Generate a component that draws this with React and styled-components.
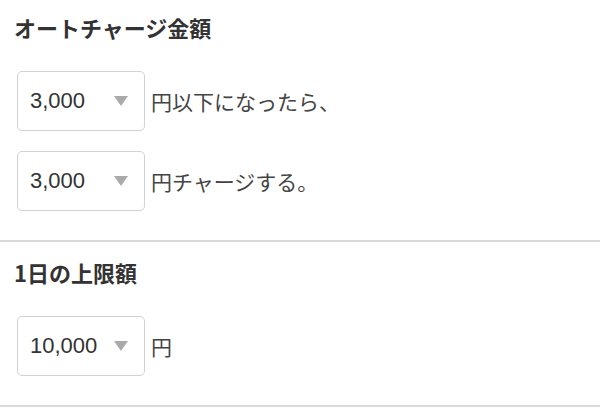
import React from "react";
import styled, { createGlobalStyle } from "styled-components";

const GlobalStyle = createGlobalStyle`
  body {
    margin: 0;
    background: #fff;
    font-family: "Liberation Sans", "Noto Sans CJK JP", sans-serif;
    color: #333;
  }
`;

const Section = styled.section`
  padding: ${(props) => (props.first ? "12px" : "15px")} 0 29px;
  border-bottom: 2px solid #dadada;
`;

const Title = styled.h2`
  margin: 0 0 29px 14px;
  font-family: "Noto Sans CJK JP", sans-serif;
  font-size: 22px;
  line-height: 30px;
  font-weight: 700;
  color: #333;
`;

const Rows = styled.div`
  display: flex;
  flex-direction: column;
  gap: 20px;
  padding-left: 17px;
`;

const Row = styled.div`
  display: flex;
  align-items: center;
  gap: 6px;
`;

const Select = styled.div`
  box-sizing: border-box;
  width: 128px;
  height: 60px;
  border: 1px solid #d2d2d2;
  border-radius: 5px;
  display: flex;
  align-items: center;
  justify-content: space-between;
  padding: 0 16px 0 12px;
  font-family: "Liberation Sans", sans-serif;
  font-size: 22px;
  color: #333;
`;

const Arrow = styled.span`
  width: 0;
  height: 0;
  border-left: 7.5px solid transparent;
  border-right: 7.5px solid transparent;
  border-top: 10px solid #aaa;
`;

const Label = styled.span`
  font-family: "Noto Sans CJK JP", sans-serif;
  font-size: 21px;
  color: #444;
`;

function AmountSelect({ value, label }) {
  return (
    <Row>
      <Select>
        <span>{value}</span>
        <Arrow />
      </Select>
      <Label>{label}</Label>
    </Row>
  );
}

export default function App() {
  return (
    <>
      <GlobalStyle />
      <Section first>
        <Title>オートチャージ金額</Title>
        <Rows>
          <AmountSelect value="3,000" label="円以下になったら、" />
          <AmountSelect value="3,000" label="円チャージする。" />
        </Rows>
      </Section>
      <Section>
        <Title>1日の上限額</Title>
        <Rows>
          <AmountSelect value="10,000" label="円" />
        </Rows>
      </Section>
    </>
  );
}
